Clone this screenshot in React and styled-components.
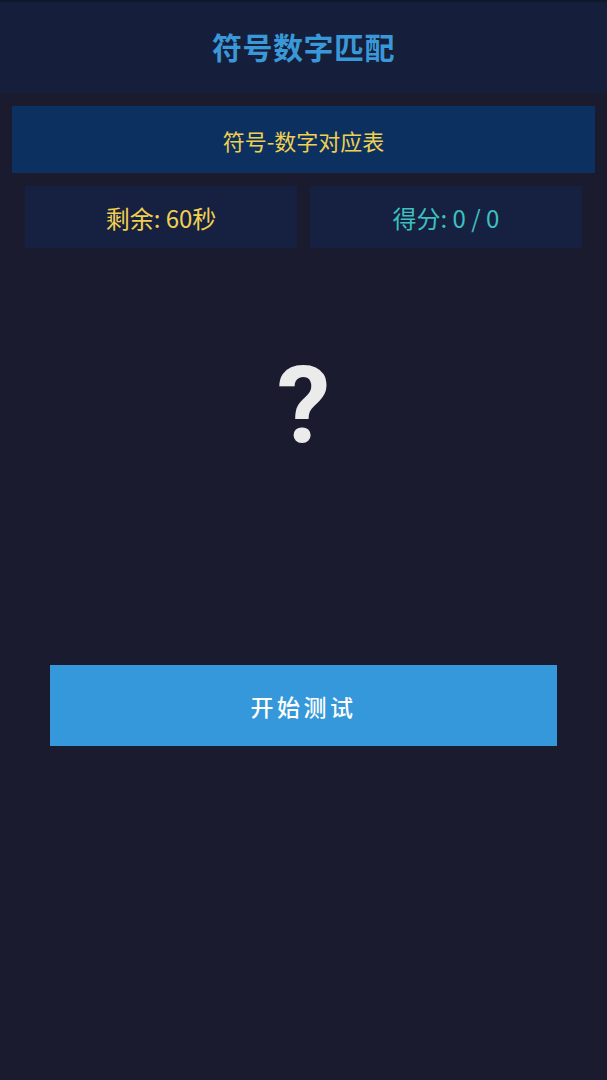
import React from 'react'
import styled, { createGlobalStyle } from 'styled-components'

const GlobalStyle = createGlobalStyle`
  html, body {
    margin: 0;
    padding: 0;
    background: #1a1b2e;
    font-family: "Noto Sans CJK SC", "Noto Sans", sans-serif;
  }
`

const Page = styled.div`
  min-height: 1080px;
  background: #1a1b2e;
  display: flex;
  flex-direction: column;
`

const Header = styled.header`
  height: 93px;
  background: #151f3b;
  border-top: 2px solid #10182c;
  box-sizing: border-box;
  display: flex;
  align-items: center;
  justify-content: center;
`

const Title = styled.h1`
  margin: 0 0 4px;
  font-size: 30px;
  font-weight: 700;
  color: #3a98d8;
  letter-spacing: 0.5px;
`

const Content = styled.main`
  padding: 13px 12px 0;
  display: flex;
  flex-direction: column;
`

const TableBar = styled.div`
  height: 67px;
  background: #0c3160;
  color: #f0d050;
  font-size: 22px;
  display: flex;
  align-items: center;
  justify-content: center;
`

const Stats = styled.div`
  display: grid;
  grid-template-columns: 1fr 1fr;
  gap: 13px;
  padding: 0 13px;
  margin-top: 13px;
`

const StatCard = styled.div`
  height: 62px;
  background: #162040;
  color: ${p => p.$color};
  font-size: 24px;
  display: flex;
  align-items: center;
  justify-content: center;
`

const Stage = styled.div`
  height: 417px;
  display: flex;
  align-items: flex-start;
  justify-content: center;
`

const Symbol = styled.div`
  margin-top: 104px;
  font-family: Roboto, "Noto Sans", sans-serif;
  font-size: 107px;
  line-height: 1;
  font-weight: 700;
  color: #ebebeb;
`

const StartButton = styled.button`
  margin: 0 38px;
  height: 81px;
  border: none;
  background: #3498db;
  color: #ffffff;
  font-family: inherit;
  font-size: 23px;
  font-weight: 500;
  letter-spacing: 3.5px;
  cursor: pointer;
`

export default function App() {
  return (
    <Page>
      <GlobalStyle />
      <Header>
        <Title>符号数字匹配</Title>
      </Header>
      <Content>
        <TableBar>符号-数字对应表</TableBar>
        <Stats>
          <StatCard $color="#f0d050">剩余: 60秒</StatCard>
          <StatCard $color="#3cc0c0">得分: 0 / 0</StatCard>
        </Stats>
        <Stage>
          <Symbol>?</Symbol>
        </Stage>
        <StartButton>开始测试</StartButton>
      </Content>
    </Page>
  )
}
